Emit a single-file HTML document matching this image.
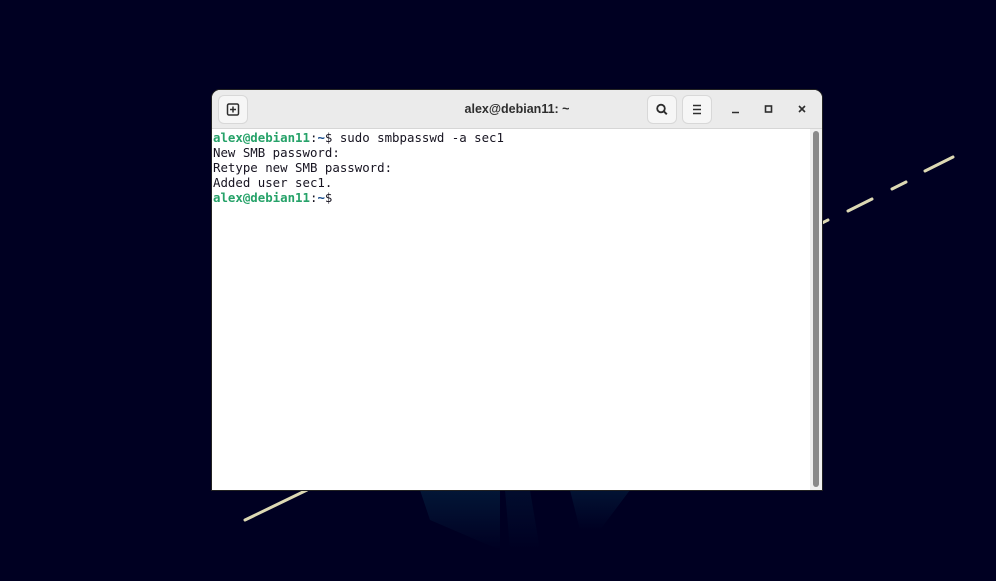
<!DOCTYPE html>
<html><head><style>
body{margin:0;width:996px;height:581px;background:#000022;overflow:hidden;position:relative;font-family:"Liberation Sans",sans-serif}
.win{position:absolute;left:212px;top:90px;width:610px;height:400px;background:#fff;border-radius:8px 8px 0 0;overflow:hidden;box-shadow:0 0 0 1px #222}
.tb{height:38px;background:#ebebeb;border-bottom:1px solid #d6d6d6;position:relative}
.btn{position:absolute;top:6px;width:28px;height:27px;background:#f6f6f6;border-radius:5px;box-shadow:0 0 0 1px #d8d8d8}
.title{position:absolute;left:0;right:0;top:12px;text-align:center;font-size:12.5px;font-weight:bold;color:#2e2e2e}
.term{position:absolute;left:1px;top:40px;font-family:"DejaVu Sans Mono","Liberation Mono",monospace;font-size:12.4px;line-height:15px;color:#171421;white-space:pre}
.g{color:#26a269;font-weight:bold}.b{color:#12488b;font-weight:bold}
.sb{position:absolute;left:601px;top:41px;width:6px;height:356px;background:#8a8a8a;border-radius:3px}
.sbt{position:absolute;left:598px;top:39px;width:12px;height:361px;background:#f0f0f0}
</style></head><body>
<svg width="996" height="581" style="position:absolute;left:0;top:0">
<defs><linearGradient id="f" x1="0" y1="0" x2="0" y2="1"><stop offset="0" stop-color="#04203f"/><stop offset="1" stop-color="#000022"/></linearGradient></defs>
<path d="M420 490 L500 490 L500 550 L430 520Z" fill="url(#f)" opacity=".7"/>
<path d="M505 490 L530 490 L540 550 L510 550Z" fill="url(#f)" opacity=".4"/>
<path d="M570 490 L630 490 L600 530 L580 530Z" fill="url(#f)" opacity=".6"/>
<g stroke="#ddd9b4" stroke-width="3" stroke-linecap="round">
<line x1="245" y1="520" x2="307" y2="490"/>
<line x1="822" y1="223" x2="828" y2="220"/>
<line x1="848" y1="211" x2="872" y2="199"/>
<line x1="892" y1="189" x2="906" y2="182"/>
<line x1="925" y1="171" x2="953" y2="157"/>
</g></svg>
<div class="win">
<div class="tb">
<div class="btn" style="left:7px"><svg width="28" height="27"><rect x="8.5" y="8" width="11" height="11" rx="1.5" fill="none" stroke="#2e2e2e" stroke-width="1.5"/><path d="M14 10.5v6M11 13.5h6" stroke="#2e2e2e" stroke-width="1.5"/></svg></div>
<div class="title">alex@debian11: ~</div>
<div class="btn" style="left:436px"><svg width="28" height="27"><circle cx="13" cy="12.5" r="3.8" fill="none" stroke="#2e2e2e" stroke-width="1.8"/><path d="M15.8 15.3l3 3" stroke="#2e2e2e" stroke-width="2"/></svg></div>
<div class="btn" style="left:471px"><svg width="28" height="27"><path d="M10 9.5h8M10 13.5h8M10 17.5h8" stroke="#2e2e2e" stroke-width="1.5"/></svg></div>
<svg width="90" height="38" style="position:absolute;left:515px;top:0"><path d="M5 22.5h7" stroke="#2e2e2e" stroke-width="1.6"/><rect x="38.5" y="16" width="6" height="6" fill="none" stroke="#2e2e2e" stroke-width="1.6"/><path d="M72 16l6 6M78 16l-6 6" stroke="#2e2e2e" stroke-width="1.6"/></svg>
</div>
<div class="term"><span class="g">alex@debian11</span>:<span class="b">~</span>$ sudo smbpasswd -a sec1
New SMB password:
Retype new SMB password:
Added user sec1.
<span class="g">alex@debian11</span>:<span class="b">~</span>$ </div>
<div class="sbt"></div><div class="sb"></div>
</div>
</body></html>
